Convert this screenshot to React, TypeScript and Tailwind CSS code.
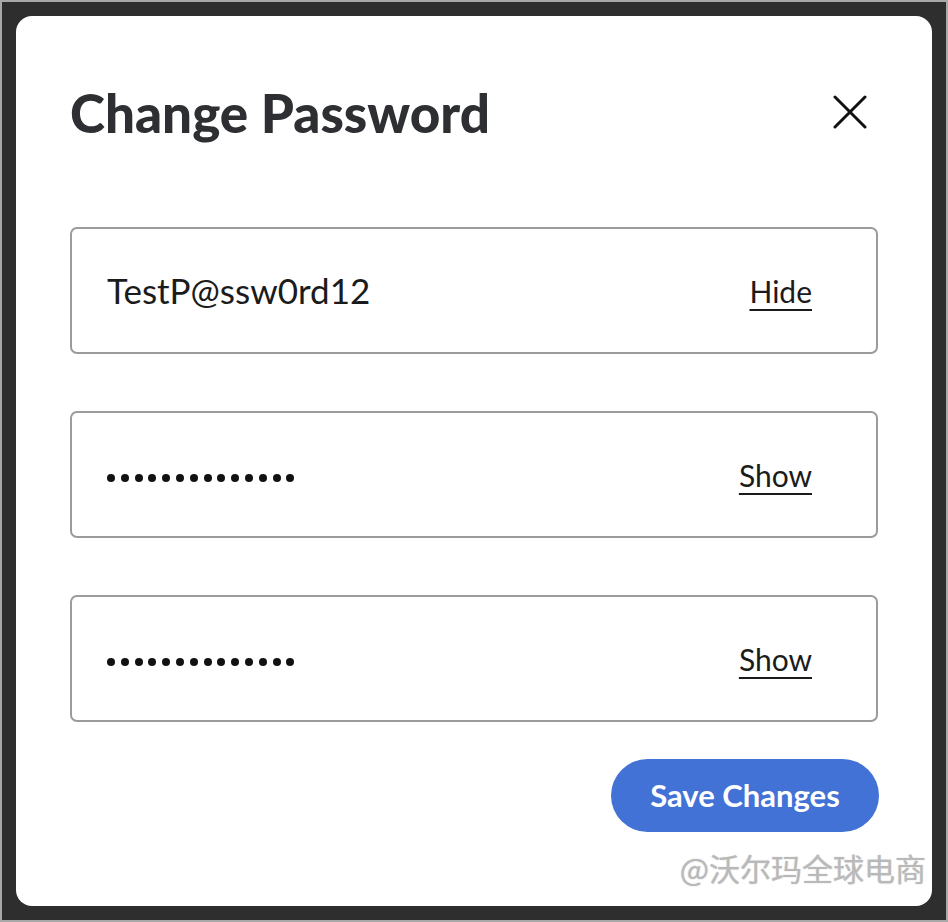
import {useState} from "react";

const font = {fontFamily: "Lato, 'Noto Sans', 'Noto Sans CJK SC', sans-serif"};

type Field = {value: string; visible: boolean};

function Dots({count}: {count: number}) {
  return (
    <div className="flex items-center gap-[5.8px] mt-[6px]">
      {Array.from({length: count}).map((_, i) => (
        <span key={i} className="block w-[8px] h-[8px] rounded-full bg-[#111]"/>
      ))}
    </div>
  );
}

function PasswordInput({field, onToggle}: {field: Field; onToggle: () => void}) {
  return (
    <div className="h-[127px] border-2 border-[#9b9b9b] rounded-[7px] flex items-center justify-between pl-[35px] pr-[64px]">
      {field.visible ? (
        <span className="text-[35px] text-[#1b1b1b] leading-none">{field.value}</span>
      ) : (
        <Dots count={field.value.length}/>
      )}
      <button
        onClick={onToggle}
        className="text-[30px] leading-none text-[#1b1b1b] underline underline-offset-[6px] decoration-2"
      >
        {field.visible ? "Hide" : "Show"}
      </button>
    </div>
  );
}

export default function App() {
  const [fields, setFields] = useState<Field[]>([
    {value: "TestP@ssw0rd12", visible: true},
    {value: "TestP@ssw0rd12", visible: false},
    {value: "TestP@ssw0rd12", visible: false},
  ]);

  const toggle = (idx: number) => {
    setFields(fields.map((f, i) => (i === idx ? {...f, visible: !f.visible} : f)));
  };

  return (
    <div style={font} className="w-[948px] h-[922px] bg-[#2e2e2e] border-2 border-[#a8a8a8] p-[14px]">
      {/* 弹窗 */}
      <div className="w-full h-full bg-white rounded-[16px] px-[54px] pt-[61px] flex flex-col">
        <div className="flex items-center justify-between h-[70px]">
          <h1 className="text-[53px] font-black text-[#2e2f32] leading-none">Change Password</h1>
          <button className="w-[40px] h-[40px] mr-[8px] flex items-center justify-center">
            <svg width="34" height="34" viewBox="0 0 34 34" fill="none" stroke="#111" strokeWidth="3" strokeLinecap="round">
              <path d="M2 2 L32 32 M32 2 L2 32"/>
            </svg>
          </button>
        </div>

        <div className="mt-[80px] flex flex-col gap-[57px]">
          {fields.map((f, i) => (
            <PasswordInput key={i} field={f} onToggle={() => toggle(i)}/>
          ))}
        </div>

        <div className="mt-[37px] flex justify-end">
          <button className="h-[73px] w-[268px] -mr-[1px] rounded-full bg-[#4372d6] text-white text-[31px] font-bold">
            Save Changes
          </button>
        </div>

        <div className="mt-[20px] flex justify-end -mr-[48px]">
          <span
            className="text-[31px] text-[#b9b9b9] leading-none"
            style={{fontFamily: "'Noto Sans CJK SC', sans-serif", textShadow: "0 0 2px #fff, 0 0 1px #888"}}
          >
            @沃尔玛全球电商
          </span>
        </div>
      </div>
    </div>
  );
}
